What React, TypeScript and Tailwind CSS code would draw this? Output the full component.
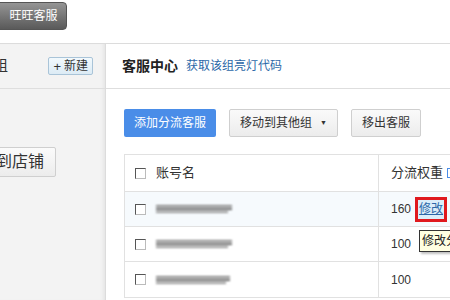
import type { ReactNode } from "react";

const FONT = {
  fontFamily: '"Liberation Sans", "Noto Sans CJK SC", sans-serif',
};

const rows = [
  { weight: "160", active: true, nameWidth: 76 },
  { weight: "100", active: false, nameWidth: 76 },
  { weight: "100", active: false, nameWidth: 74 },
];

function Checkbox() {
  return (
    <span className="block h-[11px] w-[11px] shrink-0 border border-t-[#555] border-l-[#555] border-r-[#bbb] border-b-[#bbb] bg-white" />
  );
}

function BlurredName({ width }: { width: number }) {
  return (
    <span className="flex flex-col gap-[1px] blur-[1px]" style={{ width }}>
      <span className="h-[2px] w-full bg-[#888]" />
      <span className="h-[2px] w-full bg-[#666]" />
      <span className="h-[2px] w-[95%] bg-[#999]" />
    </span>
  );
}

function GreyButton({ children }: { children: ReactNode }) {
  return (
    <button className="flex h-[28px] items-center whitespace-nowrap rounded-[2px] border border-[#cfcfcf] bg-gradient-to-b from-[#fafafa] to-[#ececec] px-[10px] text-[12px] text-[#333]">
      {children}
    </button>
  );
}

export default function App() {
  return (
    <div
      className="relative flex h-[300px] w-[450px] flex-col overflow-hidden bg-white text-[#333]"
      style={FONT}
    >
      {/* top bar */}
      <div className="flex h-[44px] shrink-0 items-start border-b border-[#dcdcdc] bg-white pt-[2px]">
        <button className="-ml-[6px] flex h-[28px] w-[73px] items-center justify-center rounded-[4px] border border-[#555] bg-gradient-to-b from-[#959595] to-[#5a5a5a] pl-[6px] text-[12px] text-white">
          旺旺客服
        </button>
      </div>

      <div className="flex flex-1">
        {/* left panel */}
        <aside className="flex w-[106px] shrink-0 flex-col overflow-hidden border-r border-[#dcdcdc] bg-[#f3f3f3] shadow-[inset_-4px_0_4px_-3px_rgba(0,0,0,0.08)]">
          <div className="flex h-[45px] items-center justify-between border-b border-[#dedede] pr-[12px]">
            <span className="-ml-[22px] whitespace-nowrap text-[15px] text-[#333]">分组</span>
            <button className="flex h-[18px] items-center whitespace-nowrap rounded-[2px] border border-[#a9c4d8] bg-gradient-to-b from-[#f2f9fd] to-[#dcebf5] px-[4px] text-[12px] text-[#333]">
              <span className="mr-[3px] text-[13px] leading-none">+</span>新建
            </button>
          </div>
          <div className="pt-[58px]">
            <button className="-ml-[48px] flex h-[30px] w-[104px] items-center justify-end whitespace-nowrap rounded-[2px] border border-[#cfcfcf] bg-gradient-to-b from-[#fbfbfb] to-[#ececec] pr-[11px] text-[16px] text-[#333]">
              返回到店铺
            </button>
          </div>
        </aside>

        {/* right panel */}
        <main className="flex min-w-0 flex-1 flex-col">
          <div className="flex h-[45px] shrink-0 items-center border-b border-[#dedede] pl-[16px]">
            <span className="text-[14px] font-bold text-[#222]">客服中心</span>
            <a className="ml-[8px] text-[12px] text-[#2c68a8]">获取该组亮灯代码</a>
          </div>

          <div className="flex gap-[13px] pl-[18px] pt-[20px]">
            <button className="flex h-[28px] items-center whitespace-nowrap rounded-[2px] bg-[#4a8de8] px-[10px] text-[12px] text-white">
              添加分流客服
            </button>
            <GreyButton>
              移动到其他组
              <span className="ml-[8px] text-[7px]">▼</span>
            </GreyButton>
            <GreyButton>移出客服</GreyButton>
          </div>

          <div className="ml-[18px] mt-[17px] w-[360px] border border-[#e1e1e1]">
            <div className="flex h-[37px] items-center border-b border-[#e1e1e1] text-[13px]">
              <div className="flex h-full w-[254px] items-center gap-[10px] border-r border-[#e1e1e1] pl-[10px]">
                <Checkbox />
                <span>账号名</span>
              </div>
              <div className="flex items-center pl-[12px]">
                <span>分流权重</span>
                <span className="ml-[4px] h-[10px] w-[10px] border border-[#4a8de8]" />
              </div>
            </div>
            {rows.map((row, i) => (
              <div
                key={i}
                className={`flex h-[35px] items-center border-b border-[#e1e1e1] text-[12px] last:border-b-0 ${
                  row.active ? "bg-[#f6fafd]" : "bg-white"
                }`}
              >
                <div className="flex h-full w-[254px] items-center gap-[10px] border-r border-[#e1e1e1] pl-[10px]">
                  <Checkbox />
                  <BlurredName width={row.nameWidth} />
                </div>
                <div className="flex items-center pl-[12px]">
                  <span>{row.weight}</span>
                  {row.active && (
                    <span className="ml-[4px] flex h-[25px] items-center border-[3px] border-[#e0191e] bg-[#dbeefa] px-[1px]">
                      <a className="text-[12px] text-[#2c68a8] underline">修改</a>
                    </span>
                  )}
                </div>
              </div>
            ))}
          </div>
        </main>
      </div>

      {/* tooltip */}
      <div className="absolute left-[419px] top-[230px] whitespace-nowrap border border-[#333] bg-[#ffffe1] px-[2px] py-[2px] text-[12px] leading-[16px] text-[#222] shadow-[2px_2px_2px_rgba(0,0,0,0.25)]">
        修改分流权重
      </div>
    </div>
  );
}
